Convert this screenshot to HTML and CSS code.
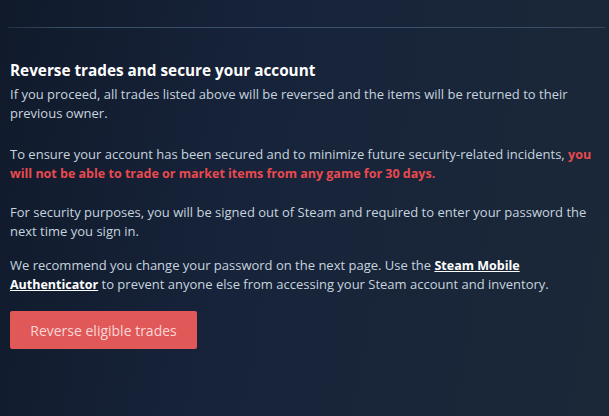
FILE: index.html
```html
<!DOCTYPE html>
<html>
<head>
<meta charset="utf-8">
<link rel="stylesheet" href="styles.css">
</head>
<body>
<div class="page">
  <hr class="divider">
  <section class="panel">
    <h2 class="title">Reverse trades and secure your account</h2>
    <p class="p1">If you proceed, all trades listed above will be reversed and the items will be returned to their previous owner.</p>
    <p class="p2">To ensure your account has been secured and to minimize future security-related incidents, <strong class="warn">you will not be able to trade or market items from any game for 30 days.</strong></p>
    <p class="p3">For security purposes, you will be signed out of Steam and required to enter your password the next time you sign in.</p>
    <p class="p4">We recommend you change your password on the next page. Use the <a class="link" href="#">Steam Mobile Authenticator</a> to prevent anyone else from accessing your Steam account and inventory.</p>
    <button class="btn">Reverse eligible trades</button>
  </section>
</div>
</body>
</html>
```
FILE: styles.css
```css
html, body {
  margin: 0;
  padding: 0;
  height: 100%;
}
body {
  background: linear-gradient(100deg, #101a2b 0%, #17233a 40%, #1b2838 100%);
  font-family: "Open Sans", "Noto Sans", sans-serif;
  color: #c6d4df;
  overflow: hidden;
}
.page {
  padding: 27px 4px 0 8px;
}
.divider {
  margin: 0;
  border: 0;
  height: 1px;
  background: linear-gradient(90deg, rgba(74,100,128,0.3), #3b5068 10%, #3b5068 90%, rgba(74,100,128,0.5));
}
.panel {
  padding: 31px 0 0 2px;
}
.title {
  margin: 0 0 4px;
  font-size: 15.3px;
  font-weight: 700;
  color: #ffffff;
  line-height: 22px;
}
p {
  margin: 0;
  font-size: 13px;
  line-height: 19px;
}
.p1 { margin-bottom: 22px; }
.p2 { margin-bottom: 20px; }
.p3 { margin-bottom: 15px; }
.p4 { margin-bottom: 0; }
.warn {
  color: #e84a4f;
  font-weight: 700;
  font-size: 12.5px;
}
.link {
  color: #ffffff;
  font-weight: 700;
  font-size: 12.5px;
  text-decoration: underline;
}
.btn {
  display: block;
  margin-top: 17px;
  border: 0;
  border-radius: 2px;
  background: #e05858;
  color: #fad6d6;
  font-family: inherit;
  font-size: 14px;
  width: 187px;
  height: 38px;
  padding: 0;
}
```
